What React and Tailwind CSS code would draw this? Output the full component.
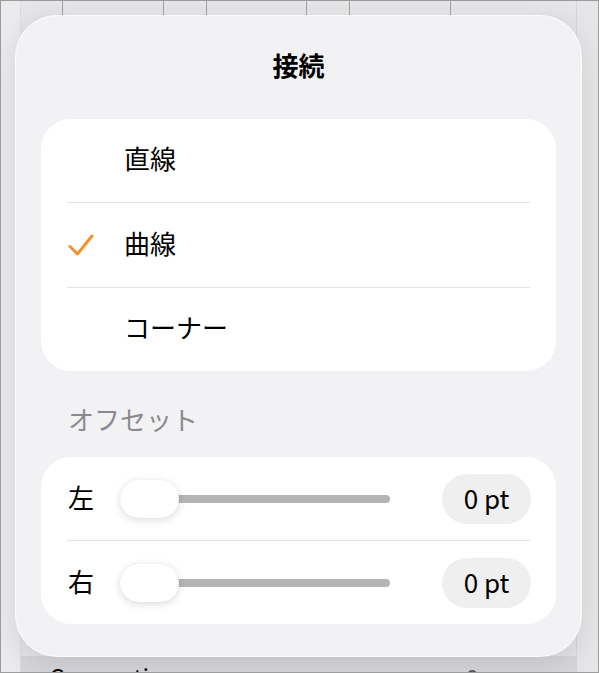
import React from "react";

function Check() {
  return (
    <svg width="28" height="24" viewBox="0 0 28 24" fill="none">
      <path d="M3 13.5 L10.5 21 L25 3" stroke="#f7902a" strokeWidth="3" strokeLinecap="round" strokeLinejoin="round" />
    </svg>
  );
}

function SliderRow({ label }) {
  return (
    <div className="flex items-center h-[83px] pl-[27px] pr-[25px]">
      <span className="w-[52px] mb-[4px] text-[26px] leading-none text-black">{label}</span>
      <div className="relative w-[270px] h-[40px] flex items-center">
        <div className="ml-[50px] flex-1 h-[8px] rounded-full bg-[#b5b5b5]" />
        <div className="absolute left-0 top-[1px] w-[59px] h-[38px] rounded-full bg-white shadow-[0_2px_8px_rgba(0,0,0,0.14),0_0_1px_rgba(0,0,0,0.08)]" />
      </div>
      <div className="ml-auto w-[89px] h-[50px] pb-[3px] rounded-full bg-[#efeff0] flex items-center justify-center text-[26px] text-black">
        0 pt
      </div>
    </div>
  );
}

export default function App() {
  const font = "font-['Noto_Sans_CJK_JP','Noto_Sans',sans-serif]";
  return (
    <div className={"relative w-[599px] h-[673px] overflow-hidden border border-[#9c9c9c] " + font}>
      {/* underlying page */}
      <div className="flex h-full">
        <div className="w-[20px] bg-[#ebebed] border-r border-[#dcdcde]" />
        <div className="flex-1 flex flex-col bg-[#e4e4e7]">
          <div className="h-[14px] flex bg-[#e6e6e8]">
            <div className="w-[42px] border-r border-[#a3a3a3]" />
            <div className="w-[101px] border-r border-[#a3a3a3]" />
            <div className="w-[43px] border-r border-[#a3a3a3]" />
            <div className="w-[100px] border-r border-[#a3a3a3]" />
            <div className="w-[43px] border-r border-[#a3a3a3]" />
            <div className="w-[101px] border-r border-[#a3a3a3]" />
            <div className="flex-1" />
          </div>
          <div className="flex-1" />
          <div className="h-[16px] bg-[#d7d7db] flex items-start pl-[28px] pr-[20px] text-[24px] text-black leading-none">
            <span className="pt-[9px]">Connection</span>
            <span className="ml-auto pt-[9px] text-[#555]">0</span>
            <span className="ml-[70px] pt-[6px] text-[#888]">›</span>
          </div>
        </div>
        <div className="w-[22px] bg-[#e6e6e8] border-l border-[#d6d6d8]" />
      </div>

      {/* popover */}
      <div className="absolute left-[14px] top-[14px] w-[567px] h-[642px] rounded-[42px] bg-[#f2f2f4] border border-white/80 shadow-[0_8px_30px_rgba(0,0,0,0.10)] px-[25px] pt-[33px]">
        <div className="h-[30px] flex items-center justify-center text-[26px] font-semibold text-black">接続</div>

        <div className="mt-[40px] rounded-[30px] bg-white">
          <div className="h-[83px] pb-[6px] flex items-center pl-[83px] text-[26px] text-black">直線</div>
          <div className="mx-[26px] h-px bg-[#e3e3e5]" />
          <div className="h-[84px] flex items-center text-[26px] text-black">
            <div className="w-[83px] pl-[26px] flex items-center"><Check /></div>
            <span className="mb-[6px]">曲線</span>
          </div>
          <div className="mx-[26px] h-px bg-[#e3e3e5]" />
          <div className="h-[83px] pb-[6px] flex items-center pl-[83px] text-[26px] text-black">コーナー</div>
        </div>

        <div className="mt-[32px] h-[30px] flex items-center pl-[27px] text-[26px] text-[#8a8a8e]">オフセット</div>

        <div className="mt-[24px] rounded-[30px] bg-white">
          <SliderRow label="左" />
          <div className="mx-[26px] h-px bg-[#e3e3e5]" />
          <SliderRow label="右" />
        </div>
      </div>
    </div>
  );
}
